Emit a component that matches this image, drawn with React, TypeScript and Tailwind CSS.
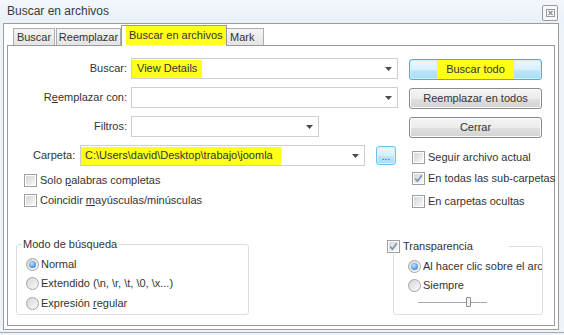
import React from "react";

const hl = "bg-[#ffff1a]";

function Check({ checked = false }: { checked?: boolean }) {
  return (
    <span className="w-[13px] h-[13px] border border-[#9e9e9e] bg-white p-px flex shrink-0">
      <span className="flex-1 bg-linear-to-br from-[#d6d6d6] to-[#f8f8f8] flex items-center justify-center">
        {checked && (
          <svg width="9" height="9" viewBox="0 0 9 9">
            <path d="M1.2 4.6 L3.4 7.2 L7.8 1.2" fill="none" stroke="#7890bd" strokeWidth="1.6" />
          </svg>
        )}
      </span>
    </span>
  );
}

function Radio({ selected = false }: { selected?: boolean }) {
  return (
    <span className="w-[13px] h-[13px] rounded-full border border-[#a4a4a4] bg-linear-to-br from-[#d6d6d6] to-[#fbfbfb] flex items-center justify-center shrink-0">
      {selected && (
        <span className="w-[7px] h-[7px] rounded-full bg-[radial-gradient(circle_at_40%_35%,#c4e6ff_0%,#5aa2e6_55%,#2a6cbf_100%)]" />
      )}
    </span>
  );
}

function Arrow() {
  return (
    <svg width="7" height="4" viewBox="0 0 7 4" className="ml-auto mr-[5px] shrink-0">
      <path d="M0 0h7L3.5 4z" fill="#4a4a4a" />
    </svg>
  );
}

function Btn({ children, primary = false }: { children: React.ReactNode; primary?: boolean }) {
  return (
    <div
      className={
        primary
          ? "h-[21px] rounded-[3px] border border-[#5aa8d8] shadow-[inset_0_0_0_1px_#c9f0ff] bg-[linear-gradient(to_bottom,#eaf7fe_0%,#d9f1fd_50%,#c2e7fb_51%,#a9dbf6_100%)] flex items-center justify-center"
          : "h-[21px] rounded-[3px] border border-[#8a8a8a] shadow-[inset_0_0_0_1px_#fbfbfb] bg-[linear-gradient(to_bottom,#f4f4f4_0%,#ececec_50%,#e0e0e0_51%,#d3d3d3_100%)] flex items-center justify-center"
      }
    >
      {children}
    </div>
  );
}

export default function App() {
  return (
    <div className="w-[564px] h-[335px] overflow-hidden bg-[#eef3f9] text-[11px] leading-[13px] text-[#333] font-['Liberation_Sans',Arial,sans-serif]">
      {/* barra de título */}
      <div className="h-[23px] flex items-center pl-[7px] pr-[6px] bg-linear-to-b from-[#f3f7fc] to-[#e9f0f8]">
        <span className="text-[12px] text-[#3a3a3a]">Buscar en archivos</span>
        <div className="ml-auto mt-[2px] w-[16px] h-[16px] rounded-[2px] border border-[#9a9a9a] bg-[#f6f8fb] flex items-center justify-center">
          <svg width="9" height="8" viewBox="0 0 9 8">
            <rect x="0.5" y="0.5" width="8" height="7" fill="none" stroke="#9a9a9a" />
            <path d="M2.5 2 L6.5 6 M6.5 2 L2.5 6" stroke="#8a8a8a" strokeWidth="1.1" />
          </svg>
        </div>
      </div>

      {/* marco */}
      <div className="ml-[3px] w-[556px] h-[307px] border border-[#9c9c9c] bg-white pl-[3px]">
        {/* pestañas */}
        <div className="h-[21px] flex items-end pl-[6px]">
          <div className="w-[42px] h-[17px] border border-b-0 border-[#adadad] bg-linear-to-b from-[#f4f4f4] to-[#e4e4e4] flex items-center justify-center">
            Buscar
          </div>
          <div className="ml-px w-[65px] h-[17px] border border-b-0 border-[#adadad] bg-linear-to-b from-[#f4f4f4] to-[#e4e4e4] flex items-center justify-center">
            Reemplazar
          </div>
          <div className="relative z-10 -mb-px w-[106px] h-[21px] border border-b-0 border-[#9a9a9a] bg-white flex items-start pl-[4px]">
            <span className={`${hl} h-[19px] px-[3px] flex items-center`}>Buscar en archivos</span>
          </div>
          <div className="w-[37px] h-[17px] border border-b-0 border-l-0 border-[#adadad] bg-linear-to-b from-[#f4f4f4] to-[#e4e4e4] flex items-center pl-[3px]">
            Mark
          </div>
        </div>

        {/* panel */}
        <div className="w-[548px] h-[281px] border border-[#9a9a9a] bg-white flex flex-col">
          <div className="h-[192px] flex">
            {/* columna izquierda */}
            <div className="w-[401px] pt-[12px] flex flex-col">
              <div className="h-[21px] flex items-center">
                <span className="w-[119px] text-right">Buscar:</span>
                <div className="ml-[4px] w-[267px] h-[21px] border border-[#cbcfd4] bg-white flex items-center">
                  <span className={`${hl} h-[18px] px-[5px] flex items-center`}>View Details</span>
                  <Arrow />
                </div>
              </div>
              <div className="mt-[8px] h-[21px] flex items-center">
                <span className="w-[119px] text-right">
                  R<span className="underline">e</span>emplazar con:
                </span>
                <div className="ml-[4px] w-[267px] h-[21px] border border-[#cbcfd4] bg-white flex items-center">
                  <Arrow />
                </div>
              </div>
              <div className="mt-[8px] h-[21px] flex items-center">
                <span className="w-[119px] text-right">Filtros:</span>
                <div className="ml-[4px] w-[188px] h-[21px] border border-[#cbcfd4] bg-white flex items-center">
                  <Arrow />
                </div>
              </div>
              <div className="mt-[8px] h-[21px] flex items-center">
                <span className="w-[72px] pl-[25px]">Carpeta:</span>
                <div className="w-[285px] h-[21px] border border-[#cbcfd4] bg-white flex items-center">
                  <span className={`${hl} h-[18px] pl-[4px] pr-[8px] flex items-center`}>
                    C:\Users\david\Desktop\trabajo\joomla
                  </span>
                  <Arrow />
                </div>
                <div className="ml-[11px] w-[20px] h-[19px] rounded-[3px] border border-[#6fc0ea] shadow-[inset_0_0_0_1px_#d4f3ff] bg-[linear-gradient(to_bottom,#eaf7fe_0%,#d6f0fd_50%,#c0e6fb_51%,#aadcf6_100%)] flex items-end justify-center pb-[3px] text-[#3d3d9a] text-[10px] leading-[8px]">
                  ...
                </div>
              </div>
              <div className="mt-[8px] h-[13px] pl-[16px] flex items-center gap-[3px]">
                <Check />
                <span>
                  Solo <span className="underline">p</span>alabras completas
                </span>
              </div>
              <div className="mt-[7px] h-[13px] pl-[16px] flex items-center gap-[3px]">
                <Check />
                <span>
                  Coincidir <span className="underline">m</span>ayúsculas/minúsculas
                </span>
              </div>
            </div>

            {/* columna derecha */}
            <div className="w-[133px] pt-[13px] flex flex-col">
              <Btn primary>
                <span className={`${hl} h-[19px] px-[9px] flex items-center`}>Buscar todo</span>
              </Btn>
              <div className="mt-[8px]">
                <Btn>Reemplazar en todos</Btn>
              </div>
              <div className="mt-[8px]">
                <Btn>Cerrar</Btn>
              </div>
              <div className="mt-[13px] h-[13px] pl-[3px] flex items-center gap-[3px]">
                <Check />
                <span className="whitespace-nowrap">Seguir archivo actual</span>
              </div>
              <div className="mt-[8px] h-[13px] pl-[3px] flex items-center gap-[3px]">
                <Check checked />
                <span className="whitespace-nowrap">En todas las sub-carpetas</span>
              </div>
              <div className="mt-[10px] h-[13px] pl-[3px] flex items-center gap-[3px]">
                <Check />
                <span className="whitespace-nowrap">En carpetas ocultas</span>
              </div>
            </div>
          </div>

          {/* grupos inferiores */}
          <div className="flex items-start">
            <fieldset className="ml-[8px] w-[233px] h-[77px] border border-[#d8e0e6] rounded-[3px]">
              <legend className="ml-[5px] px-px leading-[13px]">Modo de búsqueda</legend>
              <div className="pl-[9px] flex flex-col">
                <div className="mt-[7px] h-[13px] flex items-center gap-[2px]">
                  <Radio selected />
                  <span>Normal</span>
                </div>
                <div className="mt-[6px] h-[13px] flex items-center gap-[2px]">
                  <Radio />
                  <span>Extendido (\n, \r, \t, \0, \x...)</span>
                </div>
                <div className="mt-[7px] h-[13px] flex items-center gap-[2px]">
                  <Radio />
                  <span>
                    Expresión <span className="underline">r</span>egular
                  </span>
                </div>
              </div>
            </fieldset>

            <fieldset className="ml-[144px] w-[150px] h-[77px] border border-[#d8e0e6] rounded-[3px]">
              <legend className="-ml-[7px] pr-[36px] leading-[13px] bg-white">
                <span className="inline-flex items-center gap-[3px] mt-[2px]">
                  <Check checked />
                  <span>Transparencia</span>
                </span>
              </legend>
              <div className="pl-[14px] flex flex-col">
                <div className="mt-[6px] h-[13px] flex items-center gap-[2px]">
                  <Radio selected />
                  <span className="w-[119px] overflow-hidden whitespace-nowrap">Al hacer clic sobre el arc</span>
                </div>
                <div className="mt-[6px] h-[13px] flex items-center gap-[2px]">
                  <Radio />
                  <span>Siempre</span>
                </div>
                <div className="mt-[5px] ml-[10px] h-[10px] flex items-center">
                  <span className="w-[48px] h-px bg-[#a9a9a9]" />
                  <span className="w-[5px] h-[10px] border border-[#8c8c8c] rounded-[1px] bg-[#f4f4f4]" />
                  <span className="w-[16px] h-px bg-[#a9a9a9]" />
                </div>
              </div>
            </fieldset>
          </div>
        </div>
      </div>
      <div className="mt-[2px] h-px bg-[#a9a9a9]" />
    </div>
  );
}
